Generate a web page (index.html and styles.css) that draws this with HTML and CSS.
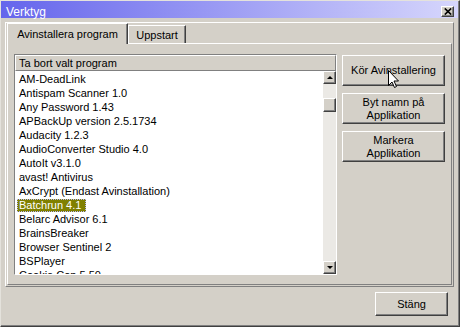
FILE: index.html
```html
<!DOCTYPE html>
<html>
<head>
<meta http-equiv="Content-Type" content="text/html; charset=UTF-8">
<title>Verktyg</title>
<link rel="stylesheet" href="styles.css">
</head>
<body>
<div class="window">
  <div class="titlebar">
    <span class="title">Verktyg</span>
    <span class="close-x">
      <svg width="8" height="7" viewBox="0 0 8 7"><path d="M0.8 0.5 L7.2 6.5 M7.2 0.5 L0.8 6.5" stroke="#000" stroke-width="1.7"/></svg>
    </span>
  </div>

  <div class="frame">
    <div class="tabs">
      <div class="tab active">Avinstallera program</div>
      <div class="tab other">Uppstart</div>
    </div>
    <div class="panel">
      <div class="list">
        <div class="list-header">Ta bort valt program</div>
        <div class="list-body">
          <div class="items">
            <div class="item"><span>AM-DeadLink</span></div>
            <div class="item"><span>Antispam Scanner 1.0</span></div>
            <div class="item"><span>Any Password 1.43</span></div>
            <div class="item"><span>APBackUp version 2.5.1734</span></div>
            <div class="item"><span>Audacity 1.2.3</span></div>
            <div class="item"><span>AudioConverter Studio 4.0</span></div>
            <div class="item"><span>AutoIt v3.1.0</span></div>
            <div class="item"><span>avast! Antivirus</span></div>
            <div class="item"><span>AxCrypt (Endast Avinstallation)</span></div>
            <div class="item selected"><span>Batchrun 4.1</span></div>
            <div class="item"><span>Belarc Advisor 6.1</span></div>
            <div class="item"><span>BrainsBreaker</span></div>
            <div class="item"><span>Browser Sentinel 2</span></div>
            <div class="item"><span>BSPlayer</span></div>
            <div class="item"><span>Cookie Cop 5.50</span></div>
          </div>
          <div class="scrollbar">
            <div class="sb-btn"><span class="arrow-up"></span></div>
            <div class="sb-thumb"></div>
            <div class="sb-btn sb-down"><span class="arrow-down"></span></div>
          </div>
        </div>
      </div>
      <div class="actions">
        <button class="btn action">Kör Avinstallering</button>
        <button class="btn action">Byt namn på<br>Applikation</button>
        <button class="btn action">Markera<br>Applikation</button>
      </div>
    </div>
  </div>

  <div class="footer">
    <button class="btn close-btn">Stäng</button>
  </div>

  <!-- mouse pointer over the first button -->
  <svg class="cursor" width="13" height="20" viewBox="0 0 13 20">
    <path d="M0.5 0.5 L0.5 15.5 L4 12 L6.5 17.5 L8.5 16.5 L6 11 L10.5 11 Z" fill="#fff" stroke="#000" stroke-width="1"/>
  </svg>
</div>
</body>
</html>
```

FILE: styles.css
```css
body {
  margin: 0;
  font-family: "Liberation Sans", Arial, sans-serif;
  font-size: 11px;
  color: #000;
  background-color: #d4d0c8;
}
.window {
  position: relative;
  width: 460px;
  height: 327px;
  box-sizing: border-box;
  background-color: #d4d0c8;
  border: 1px solid;
  border-color: #e4e2dc #404040 #404040 #e4e2dc;
  box-shadow: inset -1px -1px #808080;
  display: flex;
  flex-direction: column;
}
.titlebar {
  height: 17px;
  margin-right: 1px;
  background: linear-gradient(to right, #6565ec, #d6d6fc);
  display: flex;
  justify-content: space-between;
  align-items: flex-start;
  padding: 0 4px 0 5px;
}
.title {
  color: #fff;
  font-size: 12px;
  line-height: 12px;
  margin-top: 5px;
}
.close-x {
  width: 13px;
  height: 11px;
  margin-top: 5px;
  box-sizing: border-box;
  background-color: #d4d0c8;
  border: 1px solid;
  border-color: #fff #404040 #404040 #fff;
  box-shadow: inset -1px -1px #808080;
  display: flex;
  justify-content: center;
  align-items: center;
}
.close-x svg {
  display: block;
}
.frame {
  height: 265px;
  box-sizing: border-box;
  margin: 4px 5px 0 4px;
  border: 1px solid;
  border-color: #fff #808080 #808080 #fff;
  display: flex;
  flex-direction: column;
}
.tabs {
  height: 20px;
  padding-left: 1px;
  display: flex;
  align-items: flex-end;
  position: relative;
  z-index: 1;
}
.tab {
  box-sizing: border-box;
  height: 18px;
  border: 1px solid;
  border-bottom: none;
  border-color: #fff #404040 #fff #fff;
  box-shadow: inset -1px 0 #808080;
  background-color: #d4d0c8;
  display: flex;
  justify-content: center;
  align-items: center;
}
.tab.active {
  width: 121px;
  height: 21px;
  margin-bottom: -1px;
  padding-bottom: 1px;
}
.tab.other {
  width: 58px;
  padding-top: 1px;
}
.panel {
  flex: 1;
  min-height: 0;
  margin: 0 1px 1px 1px;
  border: 1px solid;
  border-color: #fff #808080 #808080 #fff;
  padding: 10px 6px 9px 6px;
  display: flex;
  gap: 5px;
}
.list {
  width: 323px;
  box-sizing: border-box;
  border: 1px solid;
  border-color: #808080 #fff #fff #808080;
  display: flex;
  flex-direction: column;
  overflow: hidden;
}
.list-header {
  height: 16px;
  box-sizing: border-box;
  border: 1px solid;
  border-color: #fff #808080 #808080 #fff;
  padding-left: 3px;
  line-height: 14px;
}
.list-body {
  flex: 1;
  min-height: 0;
  display: flex;
  background-color: #fff;
  overflow: hidden;
}
.items {
  flex: 1;
  padding: 2px 0 0 2px;
  overflow: hidden;
}
.item {
  height: 13px;
  line-height: 13px;
  margin-bottom: 1px;
  white-space: nowrap;
}
.item span {
  display: inline-block;
  padding: 0 5px 0 2px;
  height: 13px;
  box-sizing: border-box;
}
.item.selected span {
  background-color: #808000;
  color: #fff;
  outline: 1px dotted #b8b8ff;
  outline-offset: -1px;
}
.scrollbar {
  width: 13px;
  background-color: #ebe9e5;
  display: flex;
  flex-direction: column;
}
.sb-btn,
.sb-thumb {
  box-sizing: border-box;
  width: 13px;
  height: 13px;
  flex: none;
  background-color: #d4d0c8;
  border: 1px solid;
  border-color: #fff #404040 #404040 #fff;
  box-shadow: inset -1px -1px #808080;
  display: flex;
  justify-content: center;
  align-items: center;
}
.sb-thumb {
  height: 14px;
  margin-top: 14px;
}
.sb-down {
  margin-top: auto;
}
.arrow-up {
  width: 0;
  height: 0;
  border-left: 3px solid transparent;
  border-right: 3px solid transparent;
  border-bottom: 3px solid #000;
}
.arrow-down {
  width: 0;
  height: 0;
  border-left: 3px solid transparent;
  border-right: 3px solid transparent;
  border-top: 3px solid #000;
}
.actions {
  display: flex;
  flex-direction: column;
  gap: 7px;
  padding-top: 1px;
}
.btn {
  box-sizing: border-box;
  background-color: #d4d0c8;
  border: 1px solid;
  border-color: #fff #404040 #404040 #fff;
  box-shadow: inset -1px -1px #808080;
  font-family: "Liberation Sans", Arial, sans-serif;
  font-size: 11px;
  line-height: 13px;
  color: #000;
  padding: 0;
}
.action {
  width: 103px;
  height: 31px;
}
.footer {
  display: flex;
  justify-content: flex-end;
  padding: 5px 11px 0 0;
}
.close-btn {
  width: 73px;
  height: 24px;
}
.cursor {
  position: absolute;
  left: 387px;
  top: 69px;
}
```
